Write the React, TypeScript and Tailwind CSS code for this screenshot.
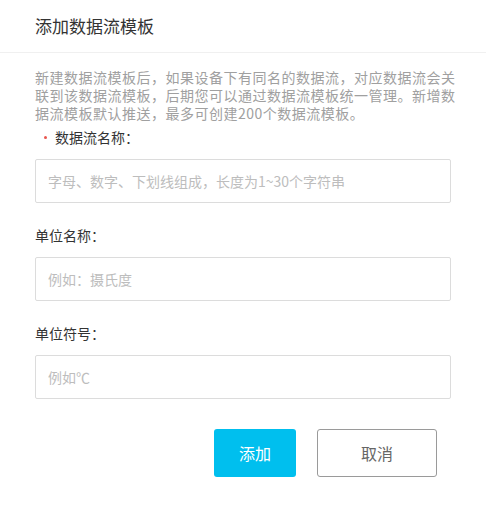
const font = {
  fontFamily: '"Noto Sans CJK SC", "Noto Sans", sans-serif',
};

type FieldProps = {
  label: string;
  placeholder: string;
  required?: boolean;
  className?: string;
};

function Field({ label, placeholder, required, className }: FieldProps) {
  return (
    <div className={className}>
      <div className="flex h-5 items-center text-[14px] leading-5 text-[#333]">
        {required && (
          <span className="ml-[9px] mr-[8px] h-[3px] w-[3px] rounded-full bg-[#e8554e]" />
        )}
        <span>{label}</span>
      </div>
      <input
        type="text"
        placeholder={placeholder}
        className="mt-3 block h-[44px] w-[416px] rounded-[2px] border border-[#dcdcdc] bg-white px-3 text-[14px] text-[#333] outline-none placeholder:text-[#bdbdbd]"
        style={font}
      />
    </div>
  );
}

export default function App() {
  return (
    <div className="h-[512px] w-[486px] bg-white" style={font}>
      <header className="flex h-[53px] items-center border-b border-[#f0f0f0] pl-[35px]">
        <h1 className="text-[17px] font-normal text-[#333]">添加数据流模板</h1>
      </header>

      <div className="pl-[35px] pt-[15px]">
        <p className="text-[14px] leading-[18px] tracking-[0.5px] text-[#a0a0a0]">
          新建数据流模板后，如果设备下有同名的数据流，对应数据流会关
          <br />
          联到该数据流模板，后期您可以通过数据流模板统一管理。新增数
          <br />
          据流模板默认推送，最多可创建200个数据流模板。
        </p>

        <Field
          className="mt-[5px]"
          label="数据流名称："
          placeholder="字母、数字、下划线组成，长度为1~30个字符串"
          required
        />
        <Field className="mt-[22px]" label="单位名称：" placeholder="例如：摄氏度" />
        <Field className="mt-[22px]" label="单位符号：" placeholder="例如℃" />

        <div className="mt-[30px] flex w-[402px] justify-end gap-[21px]">
          <button className="h-[48px] w-[82px] rounded-[3px] bg-[#00bfee] text-[16px] text-white">
            添加
          </button>
          <button className="h-[48px] w-[120px] rounded-[3px] border border-[#9a9a9a] bg-white text-[16px] text-[#666]">
            取消
          </button>
        </div>
      </div>
    </div>
  );
}
